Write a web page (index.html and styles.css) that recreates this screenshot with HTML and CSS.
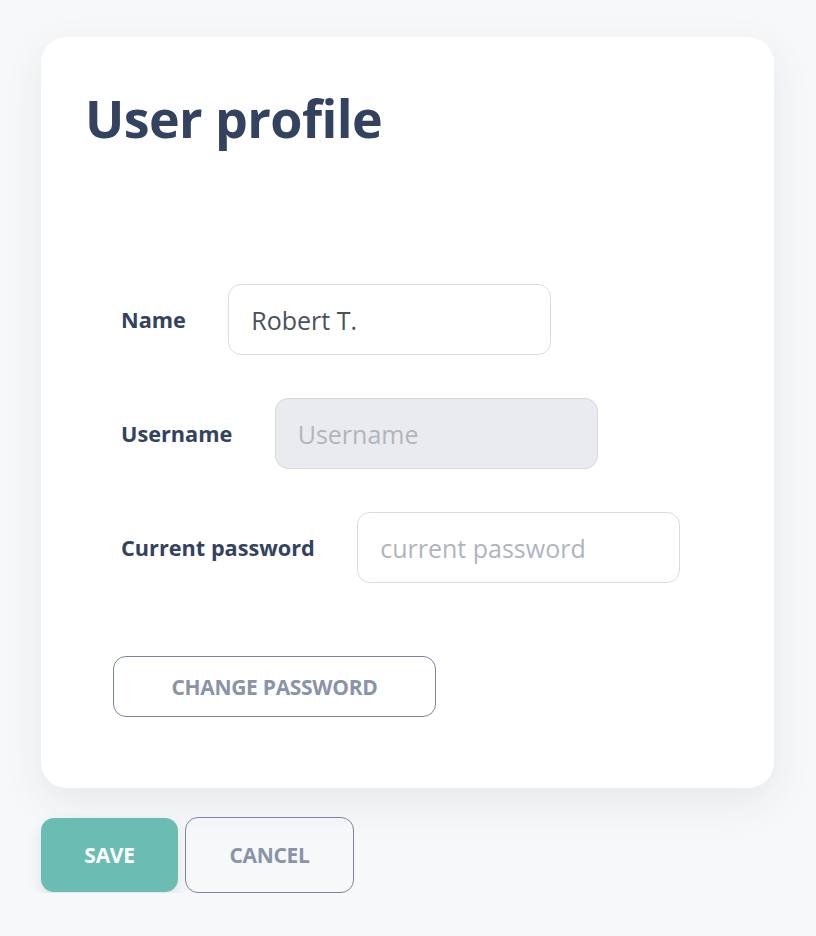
FILE: index.html
```html
<!DOCTYPE html>
<html>
<head>
<meta charset="utf-8">
<link rel="stylesheet" href="styles.css">
</head>
<body>
<main class="page">
  <section class="card">
    <h1 class="title">User profile</h1>
    <form class="form">
      <div class="row">
        <label class="label">Name</label>
        <input class="input" type="text" value="Robert T.">
      </div>
      <div class="row">
        <label class="label">Username</label>
        <input class="input input-disabled" type="text" placeholder="Username" disabled>
      </div>
      <div class="row">
        <label class="label">Current password</label>
        <input class="input" type="password" placeholder="current password">
      </div>
      <button type="button" class="btn btn-outline btn-change">CHANGE PASSWORD</button>
    </form>
  </section>
  <div class="actions">
    <button type="button" class="btn btn-primary">SAVE</button>
    <button type="button" class="btn btn-outline btn-cancel">CANCEL</button>
  </div>
</main>
</body>
</html>
```

FILE: styles.css
```css
* { box-sizing: border-box; }
html, body { margin: 0; padding: 0; }
body {
  background: #f7f8fa;
  font-family: "Open Sans", "Noto Sans", sans-serif;
  color: #33425e;
}
.page {
  padding: 37px 0 0 41px;
}
.card {
  width: 733px;
  height: 751px;
  background: #ffffff;
  border-radius: 26px;
  box-shadow: 0 14px 40px rgba(40, 50, 70, 0.08);
}
.title {
  margin: 0;
  padding: 46px 0 0 44px;
  font-size: 52px;
  font-weight: 700;
  line-height: 70px;
  color: #33425e;
  letter-spacing: -0.6px;
}
.form {
  display: flex;
  flex-direction: column;
  align-items: flex-start;
  gap: 43px;
  padding: 131px 0 0 72px;
}
.row {
  display: flex;
  align-items: center;
  padding-left: 8px;
}
.label {
  font-size: 21.7px;
  font-weight: 700;
  color: #33425e;
  margin-right: 42.4px;
}
.input {
  width: 323px;
  height: 71px;
  border: 1px solid #d9dce1;
  border-radius: 13px;
  background: #fff;
  padding: 0 22px;
  font-family: "Open Sans", sans-serif;
  font-size: 25px;
  color: #4a505c;
  outline: none;
}
.input::placeholder { color: #b0b5bd; }
.input-disabled {
  background: #eaebef;
  border-color: #d6d8de;
}
.btn {
  font-family: "Open Sans", sans-serif;
  font-size: 21px;
  font-weight: 700;
  border-radius: 13px;
  cursor: pointer;
  letter-spacing: -0.3px;
}
.btn-outline {
  background: transparent;
  border: 1px solid #7b869c;
  color: #8a93a8;
}
.btn-change {
  width: 323px;
  height: 61px;
  margin-top: 30px;
}
.actions {
  display: flex;
  align-items: center;
  gap: 7px;
  margin-top: 29px;
}
.btn-primary {
  width: 137px;
  height: 74px;
  background: #6bbcb3;
  border: none;
  color: #ffffff;
  box-shadow: 0 6px 14px rgba(40, 60, 70, 0.12);
}
.btn-cancel {
  width: 169px;
  height: 76px;
}
```
